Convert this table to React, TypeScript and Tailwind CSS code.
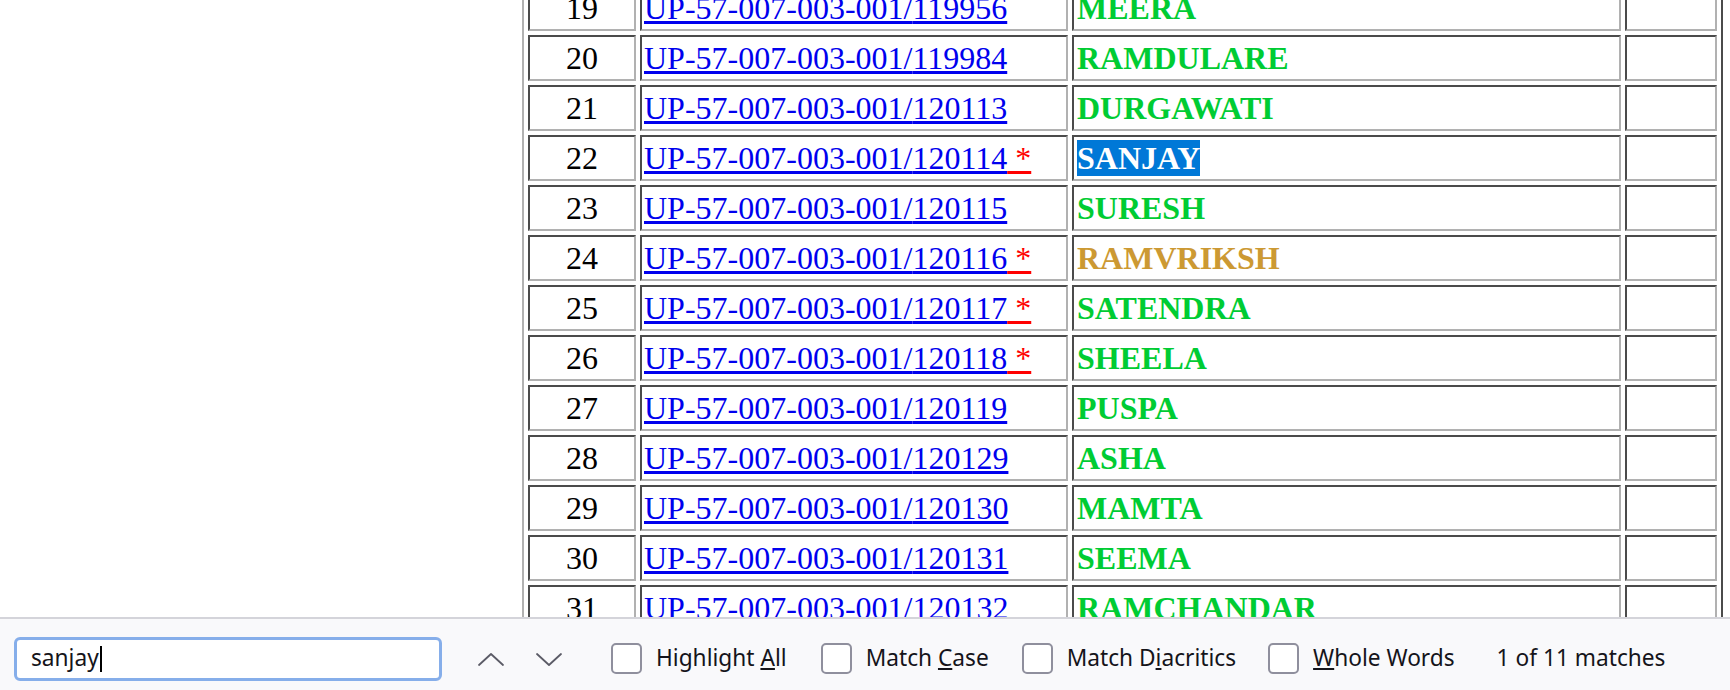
import React from "react";

type Row = { n: number; id: string; star: boolean; name: string; kind?: "hl" | "orange" };

const rows: Row[] = [
  { n: 19, id: "119956", star: false, name: "MEERA" },
  { n: 20, id: "119984", star: false, name: "RAMDULARE" },
  { n: 21, id: "120113", star: false, name: "DURGAWATI" },
  { n: 22, id: "120114", star: true, name: "SANJAY", kind: "hl" },
  { n: 23, id: "120115", star: false, name: "SURESH" },
  { n: 24, id: "120116", star: true, name: "RAMVRIKSH", kind: "orange" },
  { n: 25, id: "120117", star: true, name: "SATENDRA" },
  { n: 26, id: "120118", star: true, name: "SHEELA" },
  { n: 27, id: "120119", star: false, name: "PUSPA" },
  { n: 28, id: "120129", star: false, name: "ASHA" },
  { n: 29, id: "120130", star: false, name: "MAMTA" },
  { n: 30, id: "120131", star: false, name: "SEEMA" },
  { n: 31, id: "120132", star: false, name: "RAMCHANDAR" },
  { n: 32, id: "120133", star: false, name: "RAMESH" },
];

const cell =
  "p-0 border-2 border-t-[#4b4b4b] border-l-[#4b4b4b] border-r-[#b1b1b1] border-b-[#b1b1b1] align-middle";

function Check() {
  return <div className="w-[31px] h-[31px] rounded-[5px] border-2 border-[#8f8f9d] bg-white shrink-0" />;
}

function Chevron({ up }: { up?: boolean }) {
  return (
    <svg width="28" height="16" viewBox="0 0 28 16" fill="none">
      {up ? (
        <polyline points="2,14 14,3 26,14" stroke="#5b5b66" strokeWidth="1.8" strokeLinejoin="round" strokeLinecap="round" />
      ) : (
        <polyline points="2,3 14,14 26,3" stroke="#5b5b66" strokeWidth="1.8" strokeLinejoin="round" strokeLinecap="round" />
      )}
    </svg>
  );
}

export default function App() {
  return (
    <div className="w-[1730px] h-[690px] flex flex-col bg-white overflow-hidden">
      <div className="flex-1 min-h-0 overflow-hidden flex items-start">
        <div className="w-[522px] shrink-0" />
        <table className="-mt-[21px] border-separate border-spacing-[4px] border-2 border-t-[#b1b1b1] border-l-[#b1b1b1] border-r-[#4b4b4b] border-b-[#4b4b4b] font-['Liberation_Serif',serif] text-[32px] text-black">
          <tbody>
            {rows.map((r) => (
              <tr key={r.n}>
                <td className={cell}>
                  <div className="w-[104px] h-[42px] flex items-center justify-center">
                    <span>{r.n}</span>
                  </div>
                </td>
                <td className={cell}>
                  <div className="w-[424px] h-[42px] flex items-center px-[2px]">
                    <a href="#" className="no-underline text-[#0000ee] whitespace-nowrap">
                      <span className="underline decoration-[#0000ee]">UP-57-007-003-001/{r.id}</span>
                      {r.star && <span className="underline decoration-[#ff0000] text-[#ff0000]"> *</span>}
                    </a>
                  </div>
                </td>
                <td className={cell}>
                  <div className="w-[545px] h-[42px] flex items-center px-[3px]">
                    <div className="leading-[34px] font-bold">
                      <span
                        className={
                          r.kind === "hl"
                            ? "text-white bg-[#0078d7]"
                            : r.kind === "orange"
                            ? "text-[#cc9933]"
                            : "text-[#00cc33]"
                        }
                      >
                        {r.name}
                      </span>
                    </div>
                  </div>
                </td>
                <td className={cell}>
                  <div className="w-[88px] h-[42px]" />
                </td>
              </tr>
            ))}
          </tbody>
        </table>
      </div>

      <div className="h-[73px] shrink-0 bg-[#f9f9fb] border-t-2 border-[#d4d4da] flex items-center pt-[8px] pl-[14px] font-['Noto_Sans',sans-serif] text-[22.7px] text-[#15141a]">
        <div className="w-[428px] h-[44px] rounded-[6px] border-[3px] border-[#86aeea] bg-white flex items-center pl-[14px] shrink-0">
          <span className="leading-none">sanjay</span>
          <span className="inline-block w-[2px] h-[26px] bg-black ml-[1px]" />
        </div>
        <button className="ml-[34px] w-[30px] h-[30px] flex items-center justify-center">
          <Chevron up />
        </button>
        <button className="ml-[28px] w-[30px] h-[30px] flex items-center justify-center">
          <Chevron />
        </button>
        <div className="ml-[47px] flex items-center gap-[14px]">
          <Check />
          <span>
            Highlight <span className="underline">A</span>ll
          </span>
        </div>
        <div className="ml-[34px] flex items-center gap-[14px]">
          <Check />
          <span>
            Match <span className="underline">C</span>ase
          </span>
        </div>
        <div className="ml-[33px] flex items-center gap-[14px]">
          <Check />
          <span>
            Match D<span className="underline">i</span>acritics
          </span>
        </div>
        <div className="ml-[32px] flex items-center gap-[14px]">
          <Check />
          <span>
            <span className="underline">W</span>hole Words
          </span>
        </div>
        <span className="ml-[42px]">1 of 11 matches</span>
      </div>
    </div>
  );
}
